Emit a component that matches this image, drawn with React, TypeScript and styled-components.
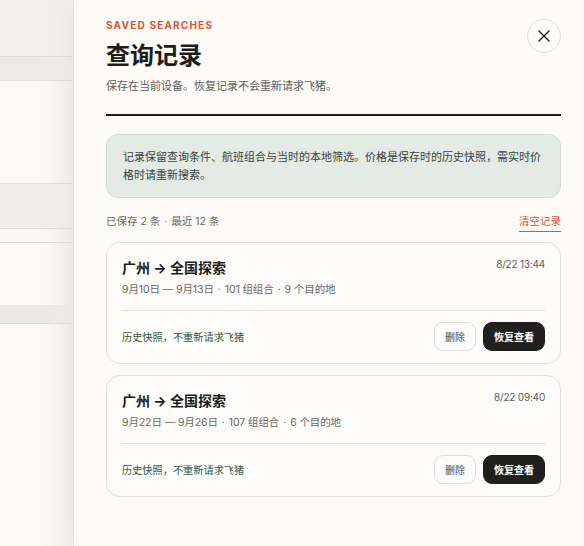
import React from "react";
import styled, { createGlobalStyle } from "styled-components";
import { X } from "lucide-react";

const GlobalStyle = createGlobalStyle`
  html, body {
    margin: 0;
    padding: 0;
    height: 100%;
    background: #fcfbf8;
  }
  body {
    font-family: "Inter", "Noto Sans CJK SC", sans-serif;
    color: #1f1f1d;
    -webkit-font-smoothing: antialiased;
  }
  #root {
    min-height: 100vh;
  }
  * { box-sizing: border-box; }
`;

const Shell = styled.div`
  display: flex;
  min-height: 100vh;
`;

/* The page underneath the drawer */
const Backdrop = styled.div`
  flex: 0 0 73px;
  display: flex;
  flex-direction: column;
  background: #f8f7f3;
`;

const BackdropRow = styled.div<{ $h?: number; $tone: string; $line?: boolean; $grow?: boolean }>`
  height: ${(p) => (p.$h ? `${p.$h}px` : "auto")};
  flex: ${(p) => (p.$grow ? "1 1 auto" : "0 0 auto")};
  background: linear-gradient(90deg, ${(p) => p.$tone} 0%, ${(p) => p.$tone} 60%, #eeede8 100%);
  border-bottom: ${(p) => (p.$line ? "1px solid #dddcd7" : "none")};
`;

const Drawer = styled.aside`
  position: relative;
  z-index: 1;
  flex: 1 1 auto;
  background: #fcfbf8;
  border-left: 1px solid #e4e3de;
  box-shadow: -10px 0 24px -14px rgba(0, 0, 0, 0.05);
  padding: 18px 23px 24px 32px;
  display: flex;
  flex-direction: column;
`;

const Header = styled.header`
  display: grid;
  grid-template-columns: 1fr auto;
  align-items: start;
  padding-bottom: 20px;
  border-bottom: 2px solid #1f1f1d;
`;

const Eyebrow = styled.div`
  font-size: 10px;
  line-height: 14px;
  font-weight: 700;
  letter-spacing: 0.12em;
  color: #d6553a;
`;

const Title = styled.h1`
  margin: 8px 0 0;
  font-size: 24px;
  line-height: 32px;
  font-weight: 700;
  color: #1c1c1a;
`;

const Subtitle = styled.p`
  margin: 6px 0 0;
  font-size: 11px;
  line-height: 16px;
  color: #5f5e5a;
`;

const CloseButton = styled.button`
  margin-top: 1px;
  width: 34px;
  height: 34px;
  border-radius: 50%;
  border: 1px solid #e0dfda;
  background: #fdfcfa;
  color: #222220;
  display: grid;
  place-items: center;
  padding: 0;
  cursor: pointer;
`;

const Notice = styled.div`
  margin-top: 18px;
  padding: 13px 16px;
  background: #e4ebe6;
  border: 1px solid #d2dcd5;
  border-radius: 12px;
  font-size: 11px;
  line-height: 18px;
  color: #37423c;
`;

const StatsRow = styled.div`
  margin-top: 16px;
  display: flex;
  justify-content: space-between;
  align-items: flex-start;
  font-size: 10.5px;
  line-height: 16px;
  color: #6a6965;
`;

const ClearLink = styled.button`
  border: none;
  background: none;
  padding: 0 0 1px;
  font: inherit;
  font-size: 10.5px;
  color: #d6553a;
  border-bottom: 1px solid #d6553a;
  cursor: pointer;
`;

const Dot = styled.span`
  margin: 0 4px;
`;

const CardList = styled.div`
  margin-top: 10px;
  display: flex;
  flex-direction: column;
  gap: 11px;
`;

const Card = styled.article`
  border: 1px solid #e2e0da;
  border-radius: 14px;
  background: #fdfcfa;
  padding: 15px 15px 12px;
`;

const CardTop = styled.div`
  display: flex;
  justify-content: space-between;
  align-items: flex-start;
`;

const CardTitle = styled.h2`
  margin: 0;
  font-size: 14px;
  line-height: 20px;
  font-weight: 700;
  color: #1c1c1a;
`;

const Stamp = styled.span`
  font-size: 10px;
  line-height: 12px;
  letter-spacing: -0.2px;
  color: #5f5e5a;
`;

const Meta = styled.div`
  margin-top: 4px;
  font-size: 10.5px;
  line-height: 16px;
  letter-spacing: -0.1px;
  color: #6a6965;
`;

const CardFooter = styled.div`
  margin-top: 12px;
  padding-top: 11px;
  border-top: 1px solid #e2e0da;
  display: flex;
  align-items: center;
  justify-content: space-between;
`;

const SnapshotNote = styled.span`
  font-size: 10.2px;
  color: #2e5a44;
`;

const Actions = styled.div`
  display: flex;
  gap: 7px;
`;

const ActionButton = styled.button<{ $primary?: boolean }>`
  height: 29px;
  padding: 0 10px;
  border-radius: 9px;
  font-family: inherit;
  font-size: 10px;
  font-weight: ${(p) => (p.$primary ? 700 : 500)};
  border: 1px solid ${(p) => (p.$primary ? "#1f1f1d" : "#dedcd6")};
  background: ${(p) => (p.$primary ? "#1f1f1d" : "#fdfcfa")};
  color: ${(p) => (p.$primary ? "#ffffff" : "#6a6965")};
  cursor: pointer;
`;

type Saved = {
  route: string;
  stamp: string;
  dates: string;
  combos: number;
  destinations: number;
};

const records: Saved[] = [
  { route: "广州 → 全国探索", stamp: "8/22 13:44", dates: "9月10日 — 9月13日", combos: 101, destinations: 9 },
  { route: "广州 → 全国探索", stamp: "8/22 09:40", dates: "9月22日 — 9月26日", combos: 107, destinations: 6 },
];

const backdropRows = [
  { h: 57, tone: "#f2f1ed", line: true },
  { h: 24, tone: "#ebeae6", line: true },
  { h: 103, tone: "#faf9f5", line: true },
  { h: 45, tone: "#f0efeb", line: true },
  { h: 14, tone: "#f9f8f4", line: true },
  { h: 62, tone: "#faf9f5", line: false },
  { h: 19, tone: "#e9e8e4", line: true },
];

export default function App() {
  return (
    <>
      <GlobalStyle />
      <Shell>
        <Backdrop>
          {backdropRows.map((r, i) => (
            <BackdropRow key={i} $h={r.h} $tone={r.tone} $line={r.line} />
          ))}
          <BackdropRow $tone="#faf9f5" $grow />
        </Backdrop>
        <Drawer>
          <Header>
            <div>
              <Eyebrow>SAVED SEARCHES</Eyebrow>
              <Title>查询记录</Title>
              <Subtitle>保存在当前设备。恢复记录不会重新请求飞猪。</Subtitle>
            </div>
            <CloseButton aria-label="关闭">
              <X size={20} strokeWidth={1.6} />
            </CloseButton>
          </Header>

          <Notice>
            记录保留查询条件、航班组合与当时的本地筛选。价格是保存时的历史快照，需实时价格时请重新搜索。
          </Notice>

          <StatsRow>
            <span>
              已保存 2 条<Dot>·</Dot>最近 12 条
            </span>
            <ClearLink>清空记录</ClearLink>
          </StatsRow>

          <CardList>
            {records.map((r) => (
              <Card key={r.stamp}>
                <CardTop>
                  <CardTitle>{r.route}</CardTitle>
                  <Stamp>{r.stamp}</Stamp>
                </CardTop>
                <Meta>
                  {r.dates}
                  <Dot>·</Dot>
                  {r.combos} 组组合
                  <Dot>·</Dot>
                  {r.destinations} 个目的地
                </Meta>
                <CardFooter>
                  <SnapshotNote>历史快照，不重新请求飞猪</SnapshotNote>
                  <Actions>
                    <ActionButton>删除</ActionButton>
                    <ActionButton $primary>恢复查看</ActionButton>
                  </Actions>
                </CardFooter>
              </Card>
            ))}
          </CardList>
        </Drawer>
      </Shell>
    </>
  );
}
